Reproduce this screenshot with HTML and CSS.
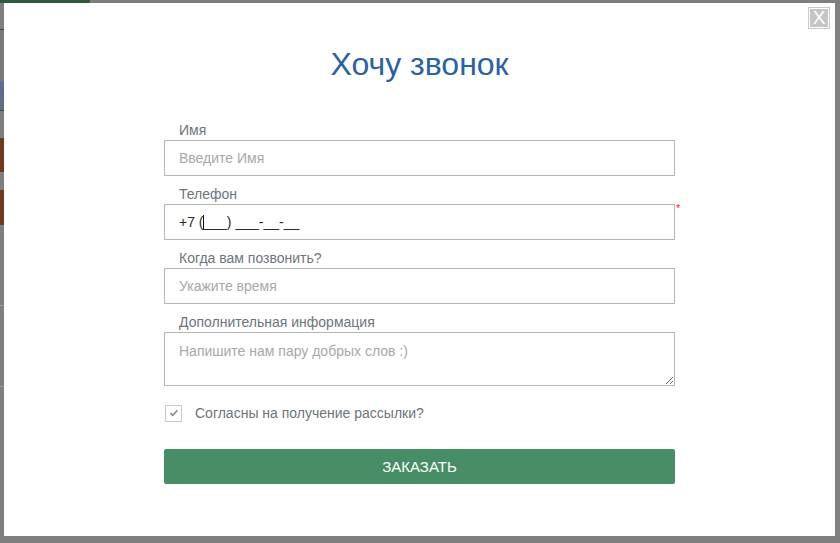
FILE: index.html
```html
<!DOCTYPE html>
<html lang="ru">
<head>
    <meta charset="UTF-8">
    <meta name="viewport" content="width=device-width, initial-scale=1.0">
    <title>Хочу звонок</title>
    <link rel="stylesheet" href="styles.css">
</head>
<body>
    <div class="page-top"><span class="page-top__bar"></span></div>

    <div class="stage">
        <div class="page-peek">
            <div class="peek peek--gray" style="height: 26px"></div>
            <div class="peek peek--line"></div>
            <div class="peek peek--light" style="height: 51px"></div>
            <div class="peek peek--blue" style="height: 29px"></div>
            <div class="peek peek--line"></div>
            <div class="peek peek--gray" style="height: 27px"></div>
            <div class="peek peek--brown" style="height: 34px"></div>
            <div class="peek peek--gray" style="height: 18px"></div>
            <div class="peek peek--brown" style="height: 35px"></div>
            <div class="peek peek--gray" style="height: 80px"></div>
            <div class="peek peek--rule"></div>
            <div class="peek peek--gray" style="height: 80px"></div>
            <div class="peek peek--rule"></div>
        </div>

        <div class="modal">
            <button class="modal-close">X</button>

            <h1 class="modal-title">Хочу звонок</h1>

            <form class="callback-form">
                <div class="field">
                    <label class="field-label">Имя</label>
                    <input type="text" class="field-control" placeholder="Введите Имя">
                </div>

                <div class="field">
                    <label class="field-label">Телефон</label>
                    <div class="field-wrap">
                        <input type="text" class="field-control field-control--filled" value="+7 (___) ___-__-__">
                        <span class="caret"></span>
                        <span class="required">*</span>
                    </div>
                </div>

                <div class="field">
                    <label class="field-label">Когда вам позвонить?</label>
                    <input type="text" class="field-control" placeholder="Укажите время">
                </div>

                <div class="field">
                    <label class="field-label">Дополнительная информация</label>
                    <textarea class="field-control field-control--area" placeholder="Напишите нам пару добрых слов :)"></textarea>
                </div>

                <label class="agree">
                    <span class="agree-box">
                        <svg width="10" height="8" viewBox="0 0 10 8">
                            <path d="M1.5 4.2 L3.8 6.4 L8.5 1.3" fill="none" stroke="#8a8a8a" stroke-width="1.6"/>
                        </svg>
                    </span>
                    <span>Согласны на получение рассылки?</span>
                </label>

                <button type="button" class="submit-btn">ЗАКАЗАТЬ</button>
            </form>
        </div>
    </div>
</body>
</html>
```

FILE: styles.css
```css
:root {
    --backdrop: #7f7f7f;
    --title: #2b62a4;
    --label: #6d747b;
    --border: #b5b5b5;
    --placeholder: #a8a8a8;
    --green: #478e66;
}

body {
    margin: 0;
    background: var(--backdrop);
    font-family: "Liberation Sans", Arial, sans-serif;
    width: 840px;
    height: 543px;
    overflow: hidden;
}

.page-top {
    height: 3px;
}

.page-top__bar {
    display: block;
    width: 90px;
    height: 3px;
    background: #2f5b3b;
}

.stage {
    display: flex;
    align-items: flex-start;
}

.page-peek {
    width: 4px;
    display: flex;
    flex-direction: column;
}

.peek--gray { background: var(--backdrop); }
.peek--light { background: #7a7876; }
.peek--blue { background: #5e6f8e; }
.peek--brown { background: #6f3a1c; }
.peek--line { height: 1px; background: #3d4a45; }
.peek--rule { height: 1px; background: #9a9a9a; }

.modal {
    position: relative;
    box-sizing: border-box;
    width: 831px;
    height: 533px;
    background: #fff;
    padding-top: 41px;
}

.modal-close {
    position: absolute;
    top: 4px;
    right: 5px;
    width: 22px;
    height: 22px;
    padding: 0;
    border: none;
    background: #c5c5c5;
    box-shadow: inset 0 0 0 1px #c9c9c9, inset 0 0 0 2px #fff;
    color: #fff;
    font-family: "Liberation Sans", Arial, sans-serif;
    font-size: 19px;
    line-height: 22px;
    text-align: center;
}

.modal-title {
    margin: 0 0 36px;
    font-size: 32px;
    line-height: 40px;
    font-weight: normal;
    color: var(--title);
    text-align: center;
}

.callback-form {
    width: 511px;
    margin: 0 auto;
}

.field {
    margin-bottom: 8px;
}

.field-label {
    display: block;
    padding-left: 15px;
    font-size: 14px;
    line-height: 20px;
    color: var(--label);
}

.field-wrap {
    position: relative;
}

.field-control {
    display: block;
    box-sizing: border-box;
    width: 100%;
    height: 36px;
    margin: 0;
    padding: 0 14px;
    border: 1px solid var(--border);
    border-radius: 0;
    font-family: inherit;
    font-size: 14px;
    color: #333;
    background: #fff;
    outline: none;
}

.field-control::placeholder {
    color: var(--placeholder);
}

.field-control--filled {
    color: #2a2a2a;
}

.field-control--area {
    height: 54px;
    padding-top: 10px;
    resize: vertical;
}

.caret {
    position: absolute;
    left: 39px;
    top: 11px;
    width: 1px;
    height: 15px;
    background: #111;
}

.required {
    position: absolute;
    left: 512px;
    top: -2px;
    color: #f22;
    font-size: 11px;
}

.agree {
    display: flex;
    align-items: center;
    gap: 13px;
    margin-top: 17px;
    height: 20px;
    font-size: 14px;
    color: var(--label);
}

.agree-box {
    box-sizing: border-box;
    width: 17px;
    height: 17px;
    margin-left: 1px;
    border: 1px solid #c9c9c9;
    display: flex;
    align-items: center;
    justify-content: center;
}

.submit-btn {
    display: block;
    width: 100%;
    height: 35px;
    margin-top: 26px;
    border: none;
    border-radius: 2px;
    background: var(--green);
    color: #fff;
    font-family: inherit;
    font-size: 15px;
    cursor: pointer;
}
```
